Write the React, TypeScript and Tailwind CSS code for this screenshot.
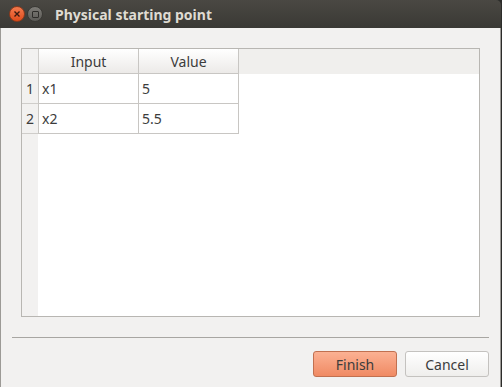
import React from 'react'

const rows = [
  { n: '1', input: 'x1', value: '5' },
  { n: '2', input: 'x2', value: '5.5' },
]

const font = { fontFamily: '"Noto Sans", "DejaVu Sans", sans-serif' }

export default function App() {
  return (
    <div className="flex h-[387px] w-[502px] flex-col overflow-hidden bg-[#2c2c2a]" style={font}>
      {/* title bar */}
      <div className="flex h-[28px] w-[501px] shrink-0 items-center rounded-tr-[5px] bg-gradient-to-b from-[#4a4843] to-[#3a3935] pl-[9px]">
        <div className="flex h-[16px] w-[16px] items-center justify-center rounded-full border border-[#8e3a1c] bg-gradient-to-b from-[#f37a4d] to-[#df4b18]">
          <svg width="8" height="8" viewBox="0 0 8 8">
            <path d="M1.5 1.5 L6.5 6.5 M6.5 1.5 L1.5 6.5" stroke="#3a1a10" strokeWidth="1.4" />
          </svg>
        </div>
        <div className="ml-[2px] flex h-[16px] w-[16px] items-center justify-center rounded-full border border-[#3a3935] bg-gradient-to-b from-[#7d7b76] to-[#5c5b57]">
          <div className="h-[7px] w-[7px] rounded-[1px] border border-[#2e2d2a]" />
        </div>
        <span className="ml-[12px] text-[14px] font-bold text-[#dfdbd2]">Physical starting point</span>
      </div>

      {/* body */}
      <div className="flex w-[501px] flex-1 flex-col border-l border-r border-[#9c9a96] bg-[#f2f1f0] px-[11px]">
        <div className="mx-[9px] mt-[20px] flex h-[269px] flex-col border border-[#b8b6b2] bg-white text-[14px] text-[#3c3c3c]">
          {/* header */}
          <div className="flex h-[25px] shrink-0 bg-[#f0efed]">
            <div className="w-[17px] border-b border-r border-[#cfcdca] bg-[#f2f1f0]" />
            <div className="flex w-[100px] items-center justify-center border-b border-r border-[#c8c6c3] bg-gradient-to-b from-white to-[#eceae8]">
              Input
            </div>
            <div className="flex w-[100px] items-center justify-center border-b border-r border-[#c8c6c3] bg-gradient-to-b from-white to-[#eceae8]">
              Value
            </div>
            <div className="flex-1" />
          </div>
          {/* rows */}
          <div className="flex flex-1">
            <div className="flex w-[16px] flex-col bg-[#f2f1f0]">
              {rows.map((r) => (
                <div key={r.n} className="flex h-[30px] items-center justify-center border-b border-[#cfcdca]">
                  {r.n}
                </div>
              ))}
            </div>
            <div className="flex flex-col">
              {rows.map((r) => (
                <div key={r.n} className="flex h-[30px]">
                  <div className="flex w-[101px] items-center border-b border-l border-r border-[#c8c6c3] pl-[3px]">
                    {r.input}
                  </div>
                  <div className="flex w-[100px] items-center border-b border-r border-[#c8c6c3] pl-[3px]">
                    {r.value}
                  </div>
                </div>
              ))}
            </div>
          </div>
        </div>

        <div className="mt-[20px] h-px bg-[#a8a6a2]" />

        <div className="mt-[13px] flex justify-end gap-[8px]">
          <button
            type="button"
            className="h-[26px] w-[84px] rounded-[3px] border border-[#c17050] bg-gradient-to-b from-[#fbb193] to-[#f08a63] text-[14px] text-[#3c3c3c]"
          >
            Finish
          </button>
          <button
            type="button"
            className="h-[26px] w-[84px] rounded-[3px] border border-[#c4c2bf] bg-gradient-to-b from-white to-[#efeeec] text-[14px] text-[#3c3c3c]"
          >
            Cancel
          </button>
        </div>
      </div>
    </div>
  )
}
